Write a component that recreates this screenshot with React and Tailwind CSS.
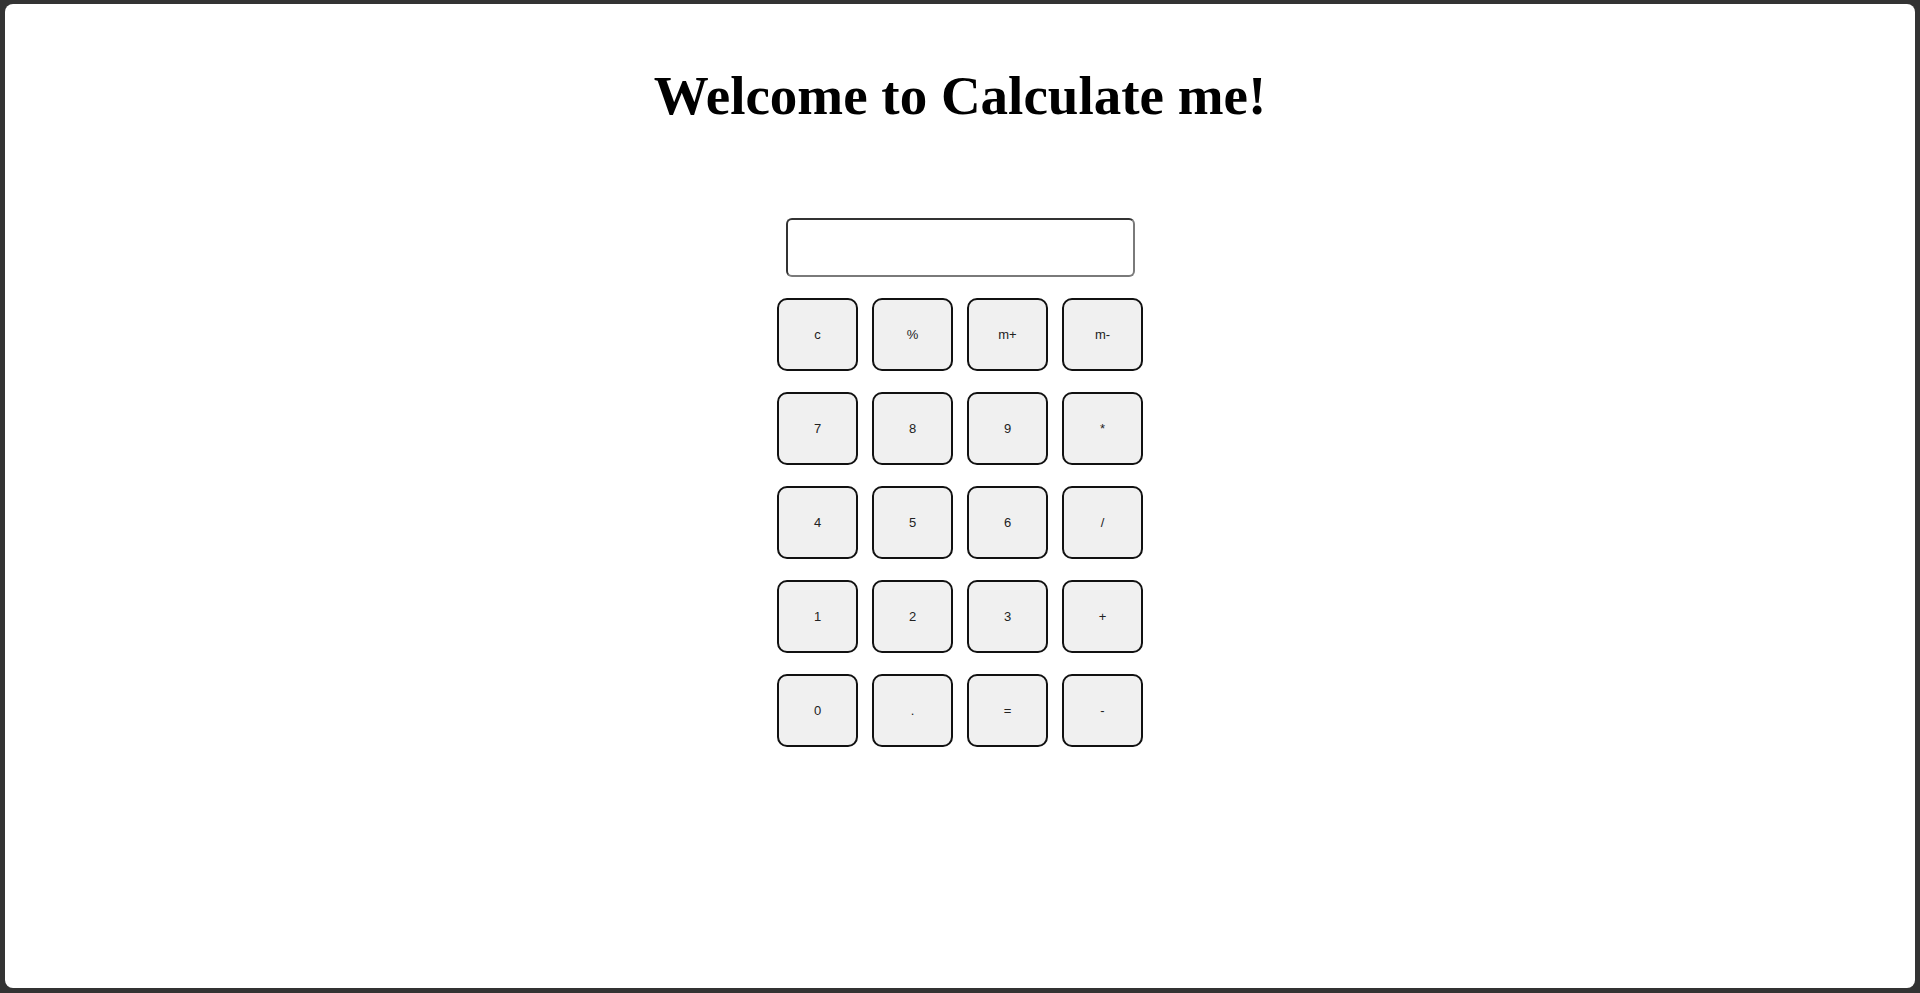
const rows = [
    ["c", "%", "m+", "m-"],
    ["7", "8", "9", "*"],
    ["4", "5", "6", "/"],
    ["1", "2", "3", "+"],
    ["0", ".", "=", "-"],
]

const App = () => {

    return (
        <div className="min-h-[993px] h-[993px] bg-[#333333] pt-[4px] px-[5px] pb-[5px] flex">
            <div className="flex-1 bg-white rounded-[8px] flex flex-col items-center">
                <h1 className="mt-[60px] font-['Liberation_Serif',serif] font-bold text-[55px] leading-[64px] text-black">Welcome to Calculate me!</h1>
                <input
                    type="text"
                    className="mt-[90px] w-[349px] h-[59px] rounded-[6px] border-2 border-t-[#333333] border-l-[#333333] border-r-[#7a7a7a] border-b-[#7a7a7a] bg-white outline-none px-2 font-['Liberation_Sans',sans-serif]"
                />
                <div className="mt-[21px] grid grid-cols-4 gap-x-[14px] gap-y-[21px]">
                    {rows.flat().map((key, i) => (
                        <button
                            key={i}
                            className="w-[81px] h-[73px] bg-[#f0f0f0] border-2 border-[#111111] rounded-[10px] font-['Liberation_Sans',sans-serif] text-[13px] text-[#222222] flex items-center justify-center"
                        >
                            {key}
                        </button>
                    ))}
                </div>
            </div>
        </div>
    )
}

export default App
